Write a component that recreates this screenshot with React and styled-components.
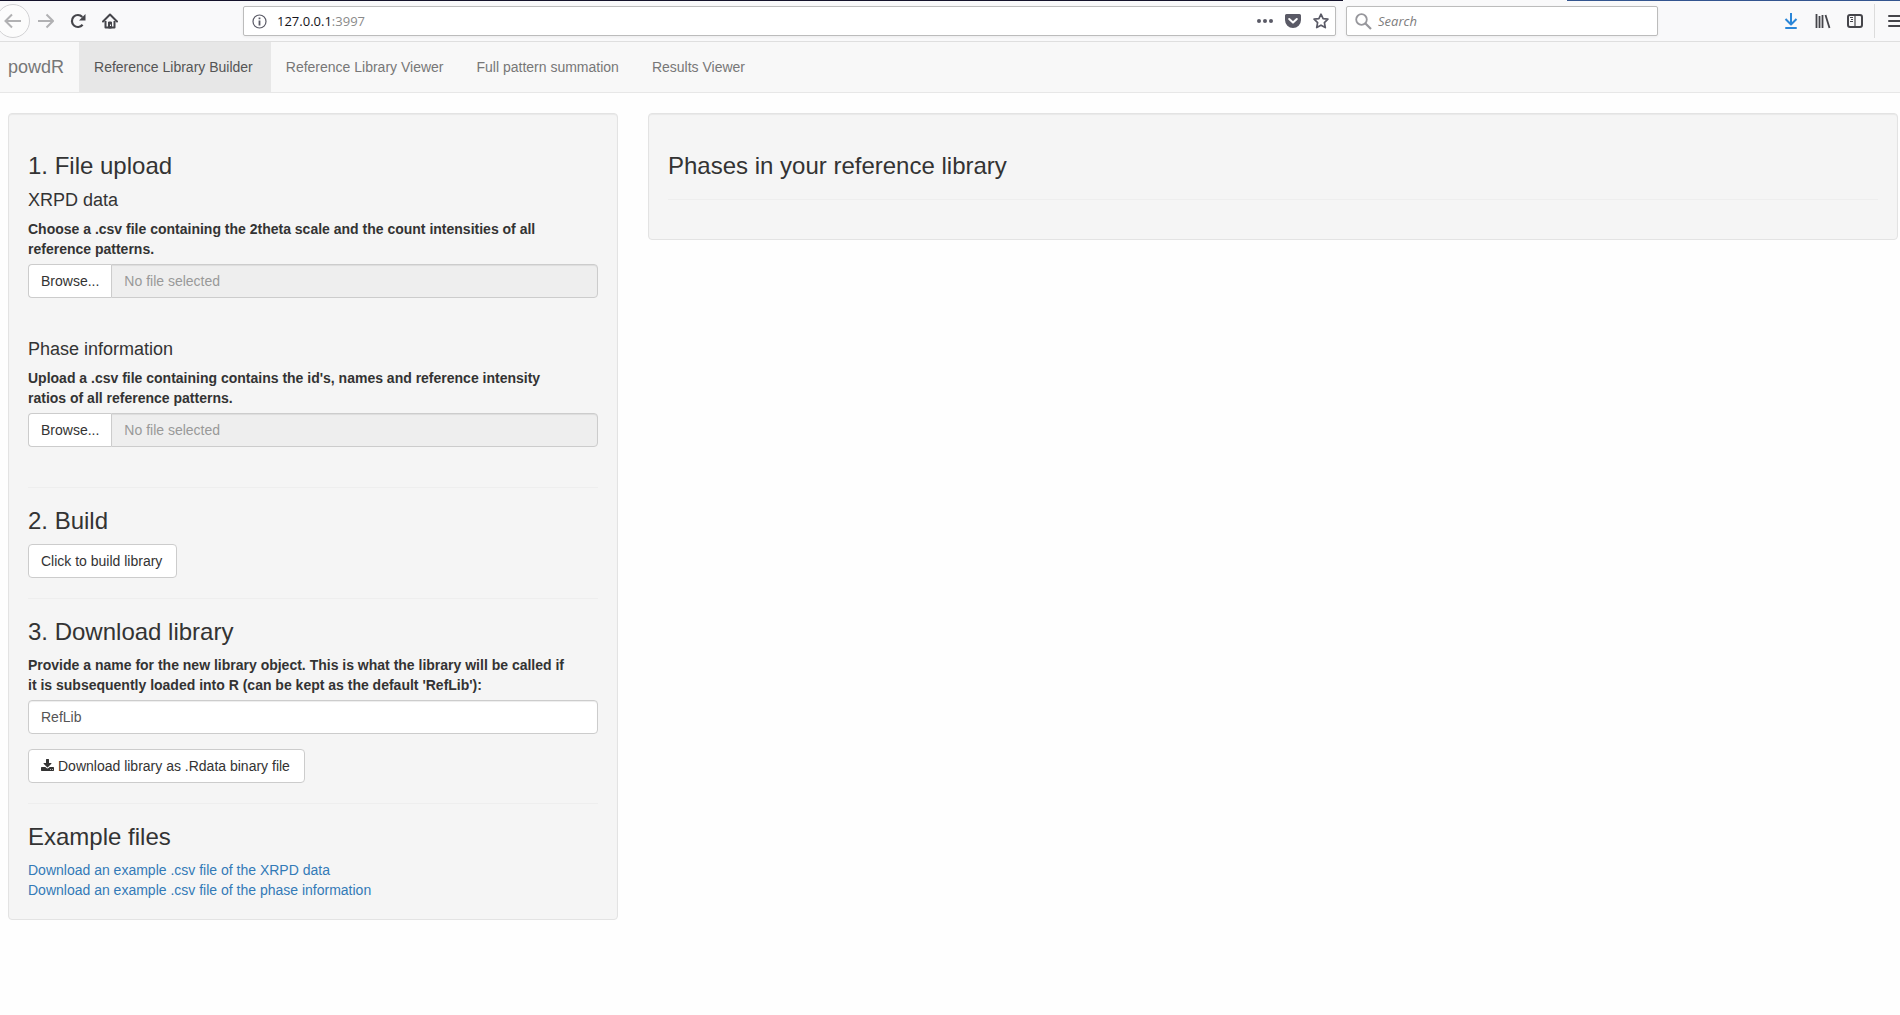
import React, { useState } from "react";
import styled, { createGlobalStyle } from "styled-components";

const GlobalStyle = createGlobalStyle`
  *, *::before, *::after { box-sizing: border-box; }
  body {
    margin: 0;
    background: #fefefe;
    color: #333;
    font: 14px/20px "Liberation Sans", Arial, sans-serif;
    overflow-x: hidden;
  }
  input, button { font: inherit; }
`;

/* ---------- browser chrome ---------- */

const TabEdge = styled.div`
  display: flex;
  height: 1px;
  background: #f9f9fa;
  justify-content: space-between;
`;

const EdgePart = styled.span`
  width: ${(p) => p.$width};
  background: ${(p) => p.$color};
`;

const Toolbar = styled.header`
  display: flex;
  align-items: center;
  height: 41px;
  background: #f9f9fa;
  border-bottom: 1px solid #dfdfdf;
`;

const IconButton = styled.button`
  display: flex;
  align-items: center;
  justify-content: ${(p) => p.$align || "center"};
  flex: none;
  width: ${(p) => p.$width || 32}px;
  height: 40px;
  padding: 0;
  border: 0;
  background: none;
  color: ${(p) => p.$color || "#45454a"};

  svg { display: block; }
`;

const Spacer = styled.div`
  flex: 0 1 117px;
`;

const Field = styled.div`
  display: flex;
  align-items: center;
  flex: ${(p) => p.$flex};
  min-width: 0;
  height: 30px;
  margin-left: ${(p) => p.$gap || 0}px;
  padding: 0 6px 0 ${(p) => p.$padLeft}px;
  gap: ${(p) => p.$space}px;
  background: #fff;
  border: 1px solid #bcbcbc;
  border-radius: 2px;
  box-shadow: 0 1px 3px rgba(0, 0, 0, 0.06);
  color: #5a5a66;
  font: 13px/20px "Open Sans", "Noto Sans", sans-serif;

  svg { display: block; flex: none; }
`;

const Address = styled.div`
  flex: 1;
  color: #8a8a8a;
`;

const Host = styled.span`
  color: #15141a;
`;

const FieldActions = styled.div`
  display: flex;
  align-items: center;
  gap: 12px;
`;

const SearchInput = styled.input`
  flex: 1;
  min-width: 0;
  padding: 0;
  border: 0;
  outline: 0;
  background: none;
  font-style: italic;

  &::placeholder { color: #7d7d7d; opacity: 1; }
`;

const Divider = styled.span`
  flex: none;
  width: 1px;
  height: 34px;
  margin: 0 0 0 3px;
  background: #dcdcdc;
`;

/* ---------- page ---------- */

const Navbar = styled.nav`
  display: flex;
  background: #f8f8f8;
  border-bottom: 1px solid #e7e7e7;
  margin-bottom: 20px;
`;

const Brand = styled.a`
  padding: 15px 15px 15px 8px;
  color: #777;
  font-size: 18px;
  line-height: 20px;
  text-decoration: none;
`;

const Tab = styled.a`
  padding: 15px 18px 15px 15px;
  color: ${(p) => (p.$active ? "#555" : "#777")};
  background: ${(p) => (p.$active ? "#e7e7e7" : "transparent")};
  text-decoration: none;
`;

const Columns = styled.main`
  display: grid;
  grid-template-columns: minmax(0, 61fr) minmax(0, 125fr);
  gap: 30px;
  align-items: start;
  padding: 0 2px 20px 8px;
`;

const Well = styled.section`
  display: flow-root;
  padding: 19px;
  background: #f5f5f5;
  border: 1px solid #e3e3e3;
  border-radius: 4px;
  box-shadow: inset 0 1px 1px rgba(0, 0, 0, 0.05);
`;

const Title = styled.h3`
  margin: 20px 0 10px;
  font-size: 24px;
  font-weight: 400;
  line-height: 26px;
`;

const Subtitle = styled.h4`
  margin: 10px 0 8px;
  font-size: 18px;
  font-weight: 400;
  line-height: 22px;
`;

const Rule = styled.hr`
  margin: 20px 0;
  border: 0;
  border-top: 1px solid #eee;
`;

const FieldLabel = styled.label`
  display: block;
  margin-bottom: 5px;
  font-weight: 700;
`;

const FormGroup = styled.div`
  margin-bottom: ${(p) => p.$bottom}px;
`;

const InputGroup = styled.div`
  display: flex;
`;

const Browse = styled.label`
  position: relative;
  flex: none;
  overflow: hidden;
  height: 34px;
  padding: 6px 12px;
  background: #fff;
  border: 1px solid #ccc;
  border-right: 0;
  border-radius: 4px 0 0 4px;
  cursor: pointer;
`;

const HiddenFile = styled.input`
  position: absolute;
  inset: 0;
  width: 100%;
  opacity: 0;
`;

const TextInput = styled.input`
  display: block;
  width: 100%;
  min-width: 0;
  height: 34px;
  padding: 6px 12px;
  color: #555;
  background: ${(p) => (p.readOnly ? "#eee" : "#fff")};
  border: 1px solid #ccc;
  border-radius: ${(p) => (p.readOnly ? "0 4px 4px 0" : "4px")};
  box-shadow: inset 0 1px 1px rgba(0, 0, 0, 0.075);
  outline: 0;

  &::placeholder { color: #999; opacity: 1; }
`;

const Button = styled.button`
  display: inline-flex;
  align-items: center;
  gap: 4px;
  height: 34px;
  padding: 6px 14px 6px 12px;
  color: #333;
  background: #fff;
  border: 1px solid #ccc;
  border-radius: 4px;
  vertical-align: top;
`;

const Links = styled.div`
  display: flex;
  flex-direction: column;
  align-items: flex-start;
`;

const Link = styled.a`
  color: #337ab7;
  text-decoration: none;
`;

/* ---------- icons ---------- */

const BackIcon = () => (
  <svg width="30" height="36" viewBox="0 0 30 36" fill="none">
    <circle cx="13" cy="18" r="16.5" fill="#fcfcfc" stroke="#d2d2d4" />
    <path d="M21 18H6M12 11.5L5.5 18l6.500 6.500" stroke="#b1b1b3" strokeWidth="2" />
  </svg>
);

const ForwardIcon = () => (
  <svg width="16" height="16" viewBox="0 0 16 16" fill="none" stroke="currentColor" strokeWidth="2">
    <path d="M0 8h15M8.500 1.500L15 8l-6.500 6.500" />
  </svg>
);

const ReloadIcon = () => (
  <svg width="16" height="16" viewBox="0 0 16 16" fill="none">
    <path d="M12.600 11.800A6 6 0 1 1 12.300 3.900" stroke="currentColor" strokeWidth="2.200" />
    <path d="M15.500 1v6.500H9z" fill="currentColor" />
  </svg>
);

const HomeIcon = () => (
  <svg width="16" height="16" viewBox="0 0 16 16" fill="none" stroke="currentColor">
    <path d="M1 8.500L8 1.500l7 7" strokeWidth="2" strokeLinecap="round" strokeLinejoin="round" />
    <path d="M3.500 8v6.500h9V8" strokeWidth="2" strokeLinejoin="round" />
    <path d="M6.500 15V9h3v6z" strokeWidth="1" fill="currentColor" />
    <path d="M8.500 11.500v1.500" stroke="#f9f9fa" strokeWidth="1" />
  </svg>
);

const InfoIcon = () => (
  <svg width="15" height="15" viewBox="0 0 15 15" fill="none" stroke="currentColor">
    <circle cx="7.500" cy="7.500" r="6.500" strokeWidth="1.200" />
    <path d="M7.500 6.500v5M7.500 3.500v1.800" strokeWidth="1.800" />
  </svg>
);

const DotsIcon = () => (
  <svg width="16" height="16" viewBox="0 0 16 16" fill="currentColor">
    <circle cx="2" cy="8" r="2" />
    <circle cx="8" cy="8" r="2" />
    <circle cx="14" cy="8" r="2" />
  </svg>
);

const PocketIcon = () => (
  <svg width="16" height="16" viewBox="0 0 16 16">
    <path d="M1.500 1h13A1.500 1.500 0 0 1 16 2.500V7A8 8 0 0 1 0 7V2.500A1.500 1.500 0 0 1 1.500 1z" fill="currentColor" />
    <path d="M4.200 6L8 9.600 11.800 6" fill="none" stroke="#fff" strokeWidth="2" strokeLinecap="round" strokeLinejoin="round" />
  </svg>
);

const StarIcon = () => (
  <svg width="16" height="16" viewBox="0 0 16 16" fill="none" stroke="currentColor" strokeWidth="1.700" strokeLinejoin="round">
    <path d="M8 1.200l2.100 4.400 4.800.6-3.500 3.400.9 5L8 12.200l-4.300 2.400.9-5L1.100 6.200l4.800-.6z" />
  </svg>
);

const SearchIcon = () => (
  <svg width="17" height="17" viewBox="0 0 17 17" fill="none" stroke="#97979c">
    <circle cx="6.500" cy="6.500" r="5.300" strokeWidth="1.800" />
    <path d="M10.500 10.500l5.500 5.500" strokeWidth="2.200" />
  </svg>
);

const ArrowDownIcon = () => (
  <svg width="16" height="16" viewBox="0 0 16 16" fill="none" stroke="currentColor" strokeWidth="2">
    <path d="M8 0v11M2.500 6L8 11.500 13.500 6" strokeLinejoin="round" />
    <path d="M3 15h10" strokeLinecap="round" />
  </svg>
);

const LibraryIcon = () => (
  <svg width="16" height="16" viewBox="0 0 16 16" fill="none" stroke="currentColor" strokeWidth="2">
    <path d="M1.500 1v14M4.500 3v12M7.500 2v13M10.500 2l4 13" strokeWidth="1.800" />
  </svg>
);

const SidebarIcon = () => (
  <svg width="16" height="16" viewBox="0 0 16 16" fill="none" stroke="currentColor">
    <rect x="1" y="2" width="14" height="12" rx="2" strokeWidth="2" />
    <path d="M8 2v12" strokeWidth="1.200" />
    <path d="M3 4.500h3M4 6.500h2M3 8.500h3" strokeWidth="1" />
  </svg>
);

const MenuIcon = () => (
  <svg width="12" height="16" viewBox="0 0 12 16" fill="none" stroke="currentColor" strokeWidth="2" strokeLinecap="round">
    <path d="M1 3h13M1 8h13M1 13h13" />
  </svg>
);

const DownloadIcon = () => (
  <svg width="13" height="14" viewBox="64 0 1664 1792" fill="currentColor">
    <path d="M1344 1344q0-26-19-45t-45-19-45 19-19 45 19 45 45 19 45-19 19-45zm256 0q0-26-19-45t-45-19-45 19-19 45 19 45 45 19 45-19 19-45zm128-224v320q0 40-28 68t-68 28h-1472q-40 0-68-28t-28-68v-320q0-40 28-68t68-28h465l135 136q58 56 136 56t136-56l136-136h464q40 0 68 28t28 68zm-325-569q17 41-14 70l-448 448q-18 19-45 19t-45-19l-448-448q-31-29-14-70 17-39 59-39h256v-448q0-26 19-45t45-19h256q26 0 45 19t19 45v448h256q42 0 59 39z" />
  </svg>
);

/* ---------- composed parts ---------- */

const tabs = [
  "Reference Library Builder",
  "Reference Library Viewer",
  "Full pattern summation",
  "Results Viewer",
];

function BrowserBar() {
  return (
    <>
      <TabEdge>
        <EdgePart $width="1343px" $color="#14122b" />
        <EdgePart $width="333px" $color="#34558f" />
      </TabEdge>
      <Toolbar>
        <IconButton $width={30} aria-label="Back"><BackIcon /></IconButton>
        <IconButton $color="#b1b1b3" aria-label="Forward"><ForwardIcon /></IconButton>
        <IconButton aria-label="Reload"><ReloadIcon /></IconButton>
        <IconButton aria-label="Home"><HomeIcon /></IconButton>
        <Spacer />
        <Field $flex="1" $padLeft={8} $space={10}>
          <InfoIcon />
          <Address><Host>127.0.0.1</Host>:3997</Address>
          <FieldActions>
            <DotsIcon />
            <PocketIcon />
            <StarIcon />
          </FieldActions>
        </Field>
        <Field $flex="0 1 312px" $gap={10} $padLeft={8} $space={6}>
          <SearchIcon />
          <SearchInput placeholder="Search" aria-label="Search" />
        </Field>
        <Spacer />
        <IconButton $color="#2a86d8" aria-label="Downloads"><ArrowDownIcon /></IconButton>
        <IconButton aria-label="Library"><LibraryIcon /></IconButton>
        <IconButton aria-label="Sidebars"><SidebarIcon /></IconButton>
        <Divider />
        <IconButton $width={25} $align="flex-end" aria-label="Menu"><MenuIcon /></IconButton>
      </Toolbar>
    </>
  );
}

function FileField({ id, label, bottom }) {
  return (
    <FormGroup $bottom={bottom}>
      <FieldLabel htmlFor={id}>{label}</FieldLabel>
      <InputGroup>
        <Browse>
          Browse...
          <HiddenFile id={id} type="file" accept=".csv" />
        </Browse>
        <TextInput readOnly placeholder="No file selected" aria-label="Selected file" />
      </InputGroup>
    </FormGroup>
  );
}

export default function App() {
  const [name, setName] = useState("RefLib");
  return (
    <>
      <GlobalStyle />
      <BrowserBar />
      <Navbar>
        <Brand href="#">powdR</Brand>
        {tabs.map((tab, i) => (
          <Tab key={tab} href="#" $active={i === 0}>{tab}</Tab>
        ))}
      </Navbar>
      <Columns>
        <Well>
          <Title>1. File upload</Title>
          <Subtitle>XRPD data</Subtitle>
          <FileField
            id="xrpd"
            bottom={40}
            label={
              <>
                Choose a .csv file containing the 2theta scale and the count intensities of all
                <br />
                reference patterns.
              </>
            }
          />
          <Subtitle>Phase information</Subtitle>
          <FileField
            id="phases"
            bottom={40}
            label={
              <>
                Upload a .csv file containing contains the id's, names and reference intensity
                <br />
                ratios of all reference patterns.
              </>
            }
          />
          <Rule />
          <Title>2. Build</Title>
          <Button type="button">Click to build library</Button>
          <Rule />
          <Title>3. Download library</Title>
          <FormGroup $bottom={15}>
            <FieldLabel htmlFor="libname">
              Provide a name for the new library object. This is what the library will be called if
              <br />
              it is subsequently loaded into R (can be kept as the default 'RefLib'):
            </FieldLabel>
            <TextInput id="libname" value={name} onChange={(e) => setName(e.target.value)} />
          </FormGroup>
          <Button type="button">
            <DownloadIcon />
            Download library as .Rdata binary file
          </Button>
          <Rule />
          <Title>Example files</Title>
          <Links>
            <Link href="#">Download an example .csv file of the XRPD data</Link>
            <Link href="#">Download an example .csv file of the phase information</Link>
          </Links>
        </Well>
        <Well>
          <Title>Phases in your reference library</Title>
          <Rule />
        </Well>
      </Columns>
    </>
  );
}
